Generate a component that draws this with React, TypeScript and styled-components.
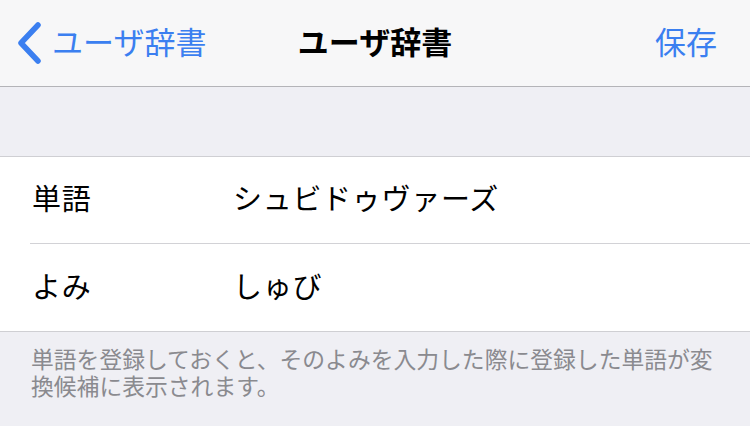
import React from "react";
import styled, { createGlobalStyle } from "styled-components";

const Global = createGlobalStyle`
  html, body { margin: 0; padding: 0; background: #efeff4; }
  body { font-family: "Noto Sans CJK JP", "Noto Sans", sans-serif; }
`;

const Page = styled.div`
  width: 750px;
  height: 426px;
  background: #efeff4;
  display: flex;
  flex-direction: column;
  overflow: hidden;
`;

const NavBar = styled.div`
  height: 87px;
  box-sizing: border-box;
  padding-bottom: 5px;
  background: #f7f7f8;
  border-bottom: 1px solid #b4b4b8;
  display: grid;
  grid-template-columns: 1fr auto 1fr;
  align-items: center;
  flex-shrink: 0;
`;

const BackButton = styled.div`
  display: flex;
  align-items: center;
  gap: 10px;
  padding-left: 17px;
  color: #3b7ff0;
  font-size: 31px;
`;

const Chevron = styled.svg`
  margin-top: 5px;
`;

const Title = styled.div`
  font-size: 31px;
  font-weight: 700;
  color: #000;
`;

const SaveButton = styled.div`
  justify-self: end;
  padding-right: 33px;
  color: #3b7ff0;
  font-size: 31px;
`;

const Spacer = styled.div`
  height: 69px;
  flex-shrink: 0;
`;

const Group = styled.div`
  background: #fff;
  border-top: 1px solid #cfcfd3;
  border-bottom: 1px solid #cfcfd3;
  padding-left: 30px;
`;

const Row = styled.div<{ $last?: boolean }>`
  height: 87px;
  box-sizing: border-box;
  padding-bottom: 6px;
  display: flex;
  align-items: center;
  border-bottom: ${(p) => (p.$last ? "none" : "1px solid #d2d2d6")};
  font-size: 29px;
  letter-spacing: 0.7px;
  color: #000;
`;

const Label = styled.div`
  width: 201px;
  padding-left: 2px;
`;

const Value = styled.div``;

const Footer = styled.div`
  padding: 13px 20px 0 31px;
  font-size: 22.8px;
  line-height: 27px;
  color: #8a8a8f;
`;

export default function App() {
  return (
    <Page>
      <Global />
      <NavBar>
        <BackButton>
          <Chevron width="25" height="42" viewBox="0 0 25 42">
            <path d="M21 3 L4 21 L21 39" fill="none" stroke="#3b7ff0" strokeWidth="5.5" strokeLinecap="round" strokeLinejoin="round" />
          </Chevron>
          ユーザ辞書
        </BackButton>
        <Title>ユーザ辞書</Title>
        <SaveButton>保存</SaveButton>
      </NavBar>
      <Spacer />
      <Group>
        <Row>
          <Label>単語</Label>
          <Value>シュビドゥヴァーズ</Value>
        </Row>
        <Row $last>
          <Label>よみ</Label>
          <Value>しゅび</Value>
        </Row>
      </Group>
      <Footer>
        単語を登録しておくと、そのよみを入力した際に登録した単語が変換候補に表示されます。
      </Footer>
    </Page>
  );
}
